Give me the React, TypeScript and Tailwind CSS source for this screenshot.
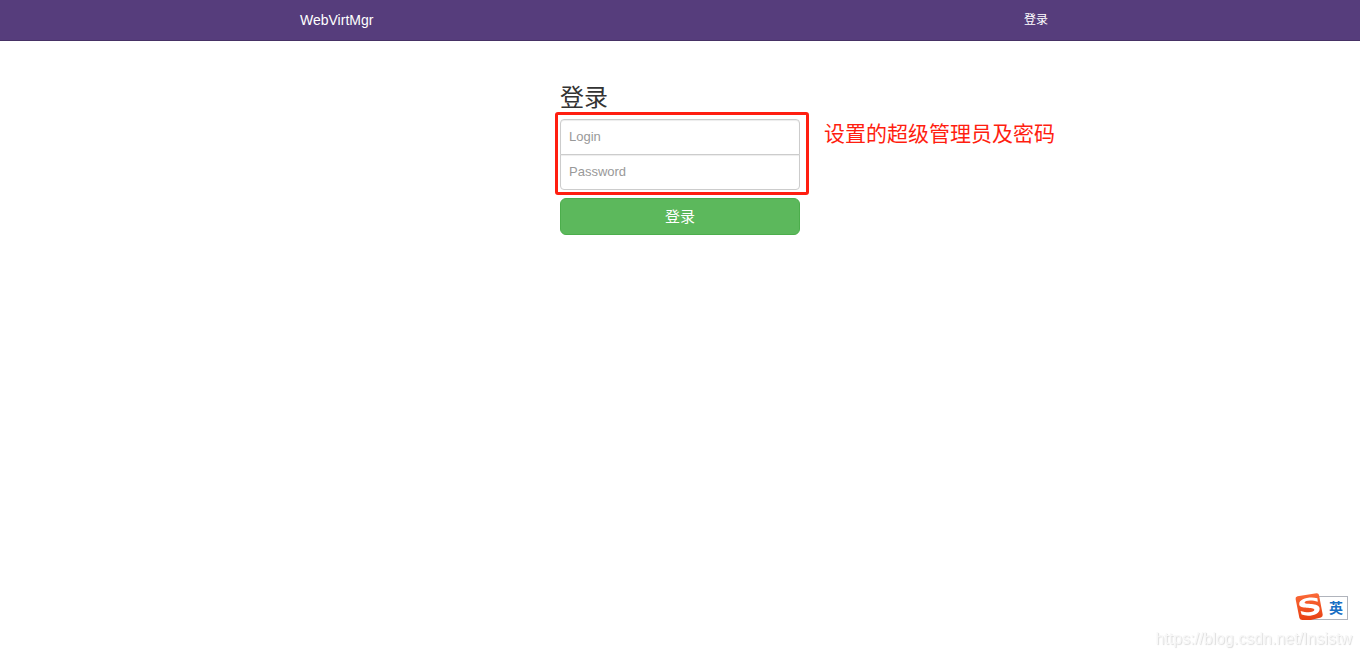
import { useState } from 'react';
import type { FormEvent, InputHTMLAttributes } from 'react';
import { clsx } from 'clsx';

interface FieldProps extends InputHTMLAttributes<HTMLInputElement> {
  label: string;
}

function Field({ label, className, ...props }: FieldProps) {
  return (
    <input
      aria-label={label}
      placeholder={label}
      className={clsx(
        'block h-9 w-full border border-[#ccc] bg-white px-2 pb-0.5 text-[13px] leading-5 text-[#555] shadow-[inset_0_1px_1px_rgba(0,0,0,0.075)] outline-none placeholder:text-[#999] focus:border-[#66afe9]',
        className
      )}
      {...props}
    />
  );
}

function Navbar() {
  return (
    <header className="border-b border-[#463265] bg-[#563d7c]">
      <nav className="mx-auto flex h-10 max-w-[760px] items-center justify-between pr-3 text-white">
        <a href="#" className="text-[14px] leading-5">
          WebVirtMgr
        </a>
        <a href="#login" className="text-[12px] leading-5">
          登录
        </a>
      </nav>
    </header>
  );
}

function LoginForm() {
  const [login, setLogin] = useState('');
  const [password, setPassword] = useState('');

  const handleSubmit = (event: FormEvent) => {
    event.preventDefault();
  };

  return (
    <form id="login" onSubmit={handleSubmit} className="mx-auto w-full max-w-[240px]">
      <h1 className="mb-1 text-2xl leading-[34px] text-[#333]">登录</h1>

      <div className="relative">
        <Field
          label="Login"
          type="text"
          value={login}
          onChange={(e) => setLogin(e.target.value)}
          className="rounded-t-[4px]"
        />
        <Field
          label="Password"
          type="password"
          value={password}
          onChange={(e) => setPassword(e.target.value)}
          className="-mt-px rounded-b-[4px]"
        />

        {/* Callout around the two fields */}
        <div className="pointer-events-none absolute -top-[7px] -right-[9px] -bottom-[5px] -left-[5px] rounded-[3px] border-3 border-[#ff1e10]" />
        <p className="absolute top-0 left-full ml-6 text-[21px] leading-[30px] whitespace-nowrap text-[#ff1e10]">
          设置的超级管理员及密码
        </p>
      </div>

      <button
        type="submit"
        className="mt-2 flex h-[37px] w-full cursor-pointer items-center justify-center rounded-md border border-[#4cae4c] bg-[#5cb85c] text-[15px] leading-5 text-white hover:bg-[#47a447]"
      >
        登录
      </button>
    </form>
  );
}

function ImeBadge() {
  return (
    <div className="fixed right-3 bottom-[35px] flex h-7 items-center">
      <svg viewBox="0 0 30 30" className="relative z-10 mb-0.5 -mr-4 h-[30px] w-[30px]" aria-hidden="true">
        <defs>
          <linearGradient id="ime-fill" x1="0" y1="0" x2="0" y2="1">
            <stop offset="0" stopColor="#fb6a38" />
            <stop offset="1" stopColor="#e84012" />
          </linearGradient>
        </defs>
        <path
          d="M3.5 4.2 L22.5 1.2 Q24.6 1 25 3 L28.7 22.5 Q29 24.6 27 25.4 Q17 28.6 8.2 28 Q6 28 5.4 26 L1.6 7 Q1.2 4.8 3.5 4.2Z"
          fill="url(#ime-fill)"
        />
        <path
          d="M23.4 6.2 C15 4.4 5 6.8 5.2 12.2 C5.4 17.6 20 14.4 20.4 17.8 C20.4 20.6 13 21 6.6 19 L7.6 22.6 C14.5 25.4 26 23 25.6 16.4 C25.2 10.2 10.4 13.2 10.6 10.6 C10.8 8.2 18 7.8 23.8 9.8Z"
          fill="#fff"
        />
      </svg>
      <span className="h-6 border border-[#b0b4bc] bg-white pr-1 pl-5 text-[14px] leading-[22px] font-bold text-[#1a6fc4]">
        英
      </span>
    </div>
  );
}

export default function App() {
  return (
    <div className="min-h-screen bg-white font-['Liberation_Sans','Noto_Sans_CJK_SC',sans-serif]">
      <Navbar />
      <main className="pt-10">
        <LoginForm />
      </main>
      <ImeBadge />
      <p className="fixed right-2 bottom-[6px] text-[16px] leading-6 text-[#f8f8f8] [text-shadow:1px_1px_1px_#dcdcdc]">
        https://blog.csdn.net/Insistw
      </p>
    </div>
  );
}
